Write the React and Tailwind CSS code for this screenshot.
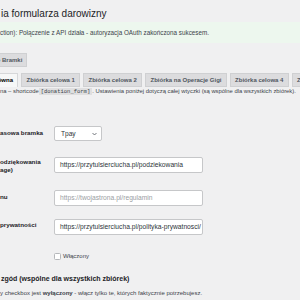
import React from "react";

const tabs = [
	{ label: "Główna", active: true },
	{ label: "Zbiórka celowa 1" },
	{ label: "Zbiórka celowa 2" },
	{ label: "Zbiórka na Operacje Gigi" },
	{ label: "Zbiórka celowa 4" },
	{ label: "Zbiórka celowa 5" },
];

const TextRow = ({ top, label, value, placeholder }) => (
	<div className={`flex ${top}`}>
		<div className="w-[54px] shrink-0 pt-[1px] text-[6.25px] leading-[7.6px] font-bold text-[#1d2327] whitespace-nowrap">
			{label}
		</div>
		<div className="w-[149px] h-[16px] flex items-center pl-[5px] pr-[3px] bg-white border border-[#c6c7c9] rounded-[2px] text-[6.7px] whitespace-nowrap overflow-hidden">
			{value ? (
				<span className="text-[#2c3338]">{value}</span>
			) : (
				<span className="text-[#9a9ea3]">{placeholder}</span>
			)}
		</div>
	</div>
);

const App = () => {
	return (
		<div className="w-[300px] h-[300px] overflow-hidden bg-[#f0f0f1] font-['Liberation_Sans',Arial,sans-serif] text-[#3c434a]">
			<h1 className="pt-[7px] ml-[1px] text-[10px] leading-[13px] text-[#1d2327] whitespace-nowrap">
				ia formularza darowizny
			</h1>

			{/* notice */}
			<div className="mt-[2px] h-[21px] flex items-center bg-[#edf7ee]">
				<p className="text-[6.3px] whitespace-nowrap">
					ction): Połączenie z API działa - autoryzacja OAuth zakończona sukcesem.
				</p>
			</div>

			{/* top tabs */}
			<div className="mt-[10px] flex">
				<div className="ml-[-8px] h-[14px] px-[4px] flex items-center bg-[#dcdcde] border border-[#cfd0d2] text-[6px] font-bold text-[#50575e] whitespace-nowrap">
					e Bramki
				</div>
			</div>

			{/* collection tabs */}
			<div className="mt-[6px] flex gap-[3px] ml-[-14px]">
				{tabs.map((t) => (
					<div
						key={t.label}
						className={
							t.active
								? "shrink-0 h-[14px] px-[4.3px] flex items-center bg-[#f6f7f7] border border-[#d6d7d9] border-b-0 text-[6px] font-bold text-black whitespace-nowrap"
								: "shrink-0 h-[14px] px-[4.3px] flex items-center bg-[#dcdcde] border border-[#cfd0d2] text-[6px] font-bold text-[#50575e] whitespace-nowrap"
						}
					>
						{t.label}
					</div>
				))}
			</div>

			{/* description */}
			<div className="h-[8px] flex items-center text-[5.85px] whitespace-nowrap">
				<span>na – shortcode </span>
				<code className="px-[2px] bg-[#dfdfe0] font-['Liberation_Mono',monospace] text-[5.5px] leading-[7px] text-[#3c434a]">
					[donation_form]
				</code>
				<span>. Ustawienia poniżej dotyczą całej wtyczki (są wspólne dla wszystkich zbiórek).</span>
			</div>

			{/* form */}
			<div className="mt-[31px] flex">
				<div className="w-[54px] shrink-0 pt-[3px] text-[6.25px] leading-[8px] font-bold text-[#1d2327] whitespace-nowrap">
					asowa bramka
				</div>
				<div className="w-[48px] h-[15px] flex items-center justify-between pl-[6px] pr-[4px] bg-white border border-[#c6c7c9] rounded-[2px] text-[6.6px] text-[#2c3338]">
					<span>Tpay</span>
					<svg width="5" height="4" viewBox="0 0 10 7" fill="none">
						<path d="M1 1.5l4 4 4-4" stroke="#50575e" strokeWidth="1.6" />
					</svg>
				</div>
			</div>

			<TextRow
				top="mt-[16px]"
				label={
					<>
						odziękowania
						<br />
						age)
					</>
				}
				value="https://przytulsierciucha.pl/podziekowania"
			/>
			<TextRow
				top="mt-[17px]"
				label={<span className="block pt-[2px]">nu</span>}
				placeholder="https://twojastrona.pl/regulamin"
			/>
			<TextRow
				top="mt-[13px]"
				label={<span className="block pt-[1px]">prywatności</span>}
				value="https://przytulsierciucha.pl/polityka-prywatnosci/"
			/>

			<div className="mt-[18px] ml-[54px] flex items-center">
				<div className="w-[7px] h-[7px] bg-white border border-[#b5b7ba] rounded-[1.5px]" />
				<span className="ml-[2px] text-[6px] leading-[7px]">Włączony</span>
			</div>

			<h2 className="mt-[14px] ml-[1px] text-[7px] leading-[9px] font-bold text-[#1d2327] whitespace-nowrap">
				zgód (wspólne dla wszystkich zbiórek)
			</h2>
			<p className="mt-[6px] text-[6px] leading-[8px] whitespace-nowrap">
				y checkbox jest <b className="font-bold">wyłączony</b> - włącz tylko te, których
				faktycznie potrzebujesz.
			</p>
		</div>
	);
};

export default App;
